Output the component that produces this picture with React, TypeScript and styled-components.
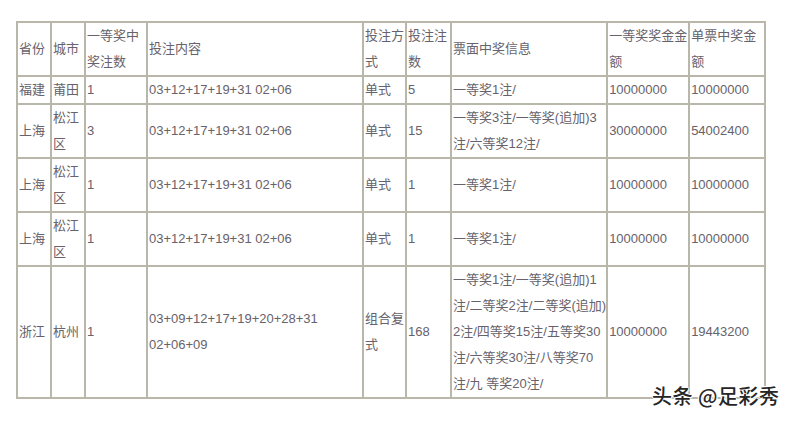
import React from "react";
import styled, { createGlobalStyle } from "styled-components";

const GlobalStyle = createGlobalStyle`
  html, body {
    margin: 0;
    padding: 0;
    background: #ffffff;
  }
`;

const Page = styled.div`
  position: relative;
  width: 789px;
  height: 421px;
  padding: 21px 0 0 16px;
  box-sizing: border-box;
  overflow: hidden;
`;

const Table = styled.table`
  border: 1px solid #b9b7a9;
  border-collapse: separate;
  border-spacing: 0;
  table-layout: fixed;
  font-family: "Liberation Sans", "Noto Sans CJK SC", Arial, sans-serif;
  font-size: 13px;
  line-height: 26px;
  color: #67626b;
`;

const Cell = styled.td<{ $w: number }>`
  box-sizing: border-box;
  width: ${(p) => p.$w}px;
  border: 1px solid #b9b7a9;
  padding: 0 0 0 1px;
  text-align: left;
  vertical-align: middle;
  font-weight: normal;
  white-space: nowrap;
  overflow: hidden;
`;

const Watermark = styled.div`
  position: absolute;
  left: 652px;
  top: 383px;
  font-family: "Noto Sans CJK SC", sans-serif;
  font-size: 20px;
  font-weight: 500;
  line-height: 26px;
  color: #262626;
  letter-spacing: 0.5px;
  text-shadow:
    1px 0 0 #fff,
    -1px 0 0 #fff,
    0 1px 0 #fff,
    0 -1px 0 #fff,
    1px 1px 1px #fff,
    -1px -1px 1px #fff;
`;

const widths = [34, 34, 62, 216, 43, 45, 155, 82, 76];

type Row = string[][];

const header: Row = [
  ["省份"],
  ["城市"],
  ["一等奖中", "奖注数"],
  ["投注内容"],
  ["投注方", "式"],
  ["投注注", "数"],
  ["票面中奖信息"],
  ["一等奖奖金金", "额"],
  ["单票中奖金", "额"],
];

const rows: Row[] = [
  [["福建"], ["莆田"], ["1"], ["03+12+17+19+31 02+06"], ["单式"], ["5"], ["一等奖1注/"], ["10000000"], ["10000000"]],
  [
    ["上海"],
    ["松江", "区"],
    ["3"],
    ["03+12+17+19+31 02+06"],
    ["单式"],
    ["15"],
    ["一等奖3注/一等奖(追加)3", "注/六等奖12注/"],
    ["30000000"],
    ["54002400"],
  ],
  [["上海"], ["松江", "区"], ["1"], ["03+12+17+19+31 02+06"], ["单式"], ["1"], ["一等奖1注/"], ["10000000"], ["10000000"]],
  [["上海"], ["松江", "区"], ["1"], ["03+12+17+19+31 02+06"], ["单式"], ["1"], ["一等奖1注/"], ["10000000"], ["10000000"]],
  [
    ["浙江"],
    ["杭州"],
    ["1"],
    ["03+09+12+17+19+20+28+31", "02+06+09"],
    ["组合复", "式"],
    ["168"],
    [
      "一等奖1注/一等奖(追加)1",
      "注/二等奖2注/二等奖(追加)",
      "2注/四等奖15注/五等奖30",
      "注/六等奖30注/八等奖70",
      "注/九 等奖20注/",
    ],
    ["10000000"],
    ["19443200"],
  ],
];

const Lines = ({ lines }: { lines: string[] }) => (
  <>
    {lines.map((line, i) => (
      <React.Fragment key={i}>
        {i > 0 && <br />}
        {line}
      </React.Fragment>
    ))}
  </>
);

export default function App() {
  return (
    <>
      <GlobalStyle />
      <Page>
        <Table>
          <thead>
            <tr>
              {header.map((cell, i) => (
                <Cell as="th" key={i} $w={widths[i]}>
                  <Lines lines={cell} />
                </Cell>
              ))}
            </tr>
          </thead>
          <tbody>
            {rows.map((row, r) => (
              <tr key={r}>
                {row.map((cell, i) => (
                  <Cell key={i} $w={widths[i]}>
                    <Lines lines={cell} />
                  </Cell>
                ))}
              </tr>
            ))}
          </tbody>
        </Table>
        <Watermark>头条 @足彩秀</Watermark>
      </Page>
    </>
  );
}
